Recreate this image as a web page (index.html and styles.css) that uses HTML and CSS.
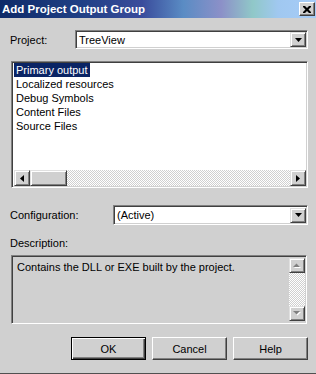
FILE: index.html
```html
<!DOCTYPE html>
<html>
<head>
<meta charset="utf-8">
<link rel="stylesheet" href="styles.css">
</head>
<body>
<div class="window">
  <div class="titlebar">
    <span class="title">Add Project Output Group</span>
    <div class="close"><svg width="8" height="7" viewBox="0 0 8 7"><path d="M0 0h2l2 2 2-2h2v1L5.5 3.5 8 6v1H6L4 5 2 7H0V6l2.5-2.5L0 1z" fill="#000"/></svg></div>
  </div>
  <div class="content">
    <div class="row project-row">
      <span class="label">Project:</span>
      <div class="combo project-combo">
        <span class="combo-text">TreeView</span>
        <div class="btn3d dd"><svg width="7" height="4" viewBox="0 0 7 4"><path d="M0 0h7L3.5 4z" fill="#000"/></svg></div>
      </div>
    </div>
    <div class="listbox">
      <ul class="items">
        <li class="sel">Primary output</li>
        <li>Localized resources</li>
        <li>Debug Symbols</li>
        <li>Content Files</li>
        <li>Source Files</li>
      </ul>
      <div class="hscroll">
        <div class="btn3d arrow"><svg width="4" height="7" viewBox="0 0 4 7"><path d="M4 0v7L0 3.5z" fill="#000"/></svg></div>
        <div class="btn3d thumb"></div>
        <div class="track"></div>
        <div class="btn3d arrow"><svg width="4" height="7" viewBox="0 0 4 7"><path d="M0 0v7l4-3.5z" fill="#000"/></svg></div>
      </div>
    </div>
    <div class="row config-row">
      <span class="label">Configuration:</span>
      <div class="combo config-combo">
        <span class="combo-text">(Active)</span>
        <div class="btn3d dd"><svg width="7" height="4" viewBox="0 0 7 4"><path d="M0 0h7L3.5 4z" fill="#000"/></svg></div>
      </div>
    </div>
    <div class="desc-label">Description:</div>
    <div class="descbox">
      <div class="desc-text">Contains the DLL or EXE built by the project.</div>
      <div class="vscroll">
        <div class="btn3d varrow"><svg width="8" height="5" viewBox="0 0 8 5"><path d="M1 5h7L4.5 1.5z" fill="#fff"/><path d="M0 4h7L3.5 0.5z" fill="#808080"/></svg></div>
        <div class="vtrack"></div>
        <div class="btn3d varrow"><svg width="8" height="5" viewBox="0 0 8 5"><path d="M1 1h7L4.5 4.5z" fill="#fff"/><path d="M0 0h7L3.5 3.5z" fill="#808080"/></svg></div>
      </div>
    </div>
    <div class="buttons">
      <div class="button default">OK</div>
      <div class="button">Cancel</div>
      <div class="button">Help</div>
    </div>
  </div>
</div>
</body>
</html>
```
FILE: styles.css
```css
html, body {
  margin: 0;
  padding: 0;
  background: #d0d0d0;
}
.window {
  width: 316px;
  height: 374px;
  box-sizing: border-box;
  background: #d0d0d0;
  border-bottom: 1px solid #505050;
  font-family: "Liberation Sans", Arial, sans-serif;
  font-size: 11px;
  color: #000;
  display: flex;
  flex-direction: column;
}
.titlebar {
  height: 18px;
  flex: none;
  display: flex;
  align-items: center;
  justify-content: space-between;
  padding: 0 1px 0 2px;
  background: linear-gradient(to right, #0e2a68 0%, #1f3f84 25%, #3a4c9c 45%, #5a8cc4 58%, #8c90c8 70%, #90c8c8 80%, #a0c8f0 88%, #a6ccf8 100%);
}
.title {
  color: #fff;
  font-weight: bold;
  font-size: 11.5px;
  white-space: nowrap;
}
.close {
  width: 16px;
  height: 14px;
  box-sizing: border-box;
  background: #d0d0d0;
  border: 1px solid;
  border-color: #fff #404040 #404040 #fff;
  box-shadow: inset -1px -1px 0 #808080;
  display: flex;
  align-items: center;
  justify-content: center;
}
.content {
  flex: 1;
  display: flex;
  flex-direction: column;
  padding: 0 8px 0 11px;
}
.row {
  display: flex;
  align-items: center;
}
.label {
  margin-left: -1px;
}
.project-row {
  margin-top: 12px;
  height: 19px;
}
.project-combo {
  margin-left: auto;
  width: 233px;
}
.config-row {
  margin-top: 17px;
  height: 20px;
}
.config-combo {
  margin-left: auto;
  width: 195px;
}
.combo {
  height: 100%;
  box-sizing: border-box;
  background: #fff;
  border: 1px solid;
  border-color: #808080 #fff #fff #808080;
  box-shadow: inset 1px 1px 0 #404040, inset -1px -1px 0 #d0d0d0;
  display: flex;
  align-items: center;
  padding: 2px 2px 2px 3px;
}
.combo-text {
  flex: 1;
}
.btn3d {
  box-sizing: border-box;
  background: #d0d0d0;
  border: 1px solid;
  border-color: #e0e0e0 #404040 #404040 #e0e0e0;
  box-shadow: inset 1px 1px 0 #fff, inset -1px -1px 0 #808080;
  display: flex;
  align-items: center;
  justify-content: center;
}
.dd {
  width: 16px;
  height: 15px;
  margin-right: -1px;
}
.listbox {
  margin-top: 12px;
  height: 127px;
  width: 297px;
  box-sizing: border-box;
  background: #fff;
  border: 1px solid;
  border-color: #808080 #fff #fff #808080;
  box-shadow: inset 1px 1px 0 #404040, inset -1px -1px 0 #d0d0d0;
  padding: 1px 2px 2px 2px;
  display: flex;
  flex-direction: column;
}
.items {
  list-style: none;
  margin: 0;
  padding: 0;
  flex: 1;
}
.items li {
  height: 14px;
  line-height: 14px;
  padding: 0 2px 0 2px;
  width: max-content;
}
.items li.sel {
  background: #0a2464;
  color: #fff;
}
.hscroll {
  height: 16px;
  display: flex;
  margin-bottom: -1px;
  margin-right: -1px;
}
.arrow {
  width: 16px;
  height: 16px;
}
.thumb {
  width: 37px;
  height: 16px;
}
.track, .vtrack {
  flex: 1;
  background: repeating-conic-gradient(#d0d0d0 0 25%, #ffffff 0 50%) 0 0 / 2px 2px;
}
.desc-label {
  margin-top: 12px;
  margin-left: -1px;
  height: 13px;
  line-height: 13px;
}
.descbox {
  margin-top: 5px;
  height: 69px;
  width: 296px;
  box-sizing: border-box;
  border: 1px solid;
  border-color: #808080 #fff #fff #808080;
  box-shadow: inset 1px 1px 0 #404040, inset -1px -1px 0 #d0d0d0;
  padding: 2px 1px 2px 2px;
  display: flex;
}
.desc-text {
  flex: 1;
  padding: 3px 0 0 3px;
}
.vscroll {
  width: 16px;
  display: flex;
  flex-direction: column;
}
.varrow {
  height: 15px;
  width: 16px;
}
.buttons {
  margin-top: 13px;
  display: flex;
  justify-content: flex-end;
  gap: 6px;
}
.button {
  width: 75px;
  height: 23px;
  box-sizing: border-box;
  background: #d0d0d0;
  border: 1px solid;
  border-color: #fff #404040 #404040 #fff;
  box-shadow: inset -1px -1px 0 #808080;
  display: flex;
  align-items: center;
  justify-content: center;
}
.button.default {
  border: 1px solid #000;
  box-shadow: inset 1px 1px 0 #fff, inset -1px -1px 0 #404040, inset -2px -2px 0 #808080;
}
```
